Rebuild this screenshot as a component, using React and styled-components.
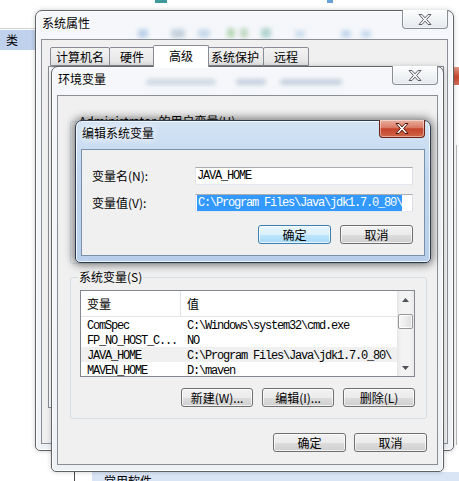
import React from 'react';
import styled, { createGlobalStyle } from 'styled-components';

const UI_FONT = `'Noto Sans CJK SC', 'Noto Sans', sans-serif`;
const MONO = `'Liberation Mono', 'Noto Sans CJK SC', monospace`;

const GlobalStyle = createGlobalStyle`
  html, body {
    margin: 0;
    padding: 0;
    background: #fff;
  }
  body {
    font-family: ${UI_FONT};
    font-size: 12px;
    color: #000;
  }
  * {
    box-sizing: border-box;
  }
`;

const Desktop = styled.div`
  position: relative;
  width: 459px;
  height: 481px;
  overflow: hidden;
  background: #fff;
`;

/* ---------- what lies behind the dialogs ---------- */

const Backdrop = styled.div`
  position: absolute;
  inset: 0;
  display: grid;
  grid-template-columns: 35px 1fr 6px;
  grid-template-rows: 1fr 9px;
`;

const LeftPane = styled.div`
  display: flex;
  flex-direction: column;
  .head {
    height: 29px;
    border-bottom: 1px solid #cfd3d8;
  }
  .row {
    margin-top: 1px;
    height: 20px;
    background: #bfd1ec;
    padding-left: 6px;
    line-height: 20px;
  }
`;

const MidPane = styled.div`
  display: flex;
  align-items: flex-start;
`;

const TopMark = styled.div`
  width: ${p => p.$w}px;
  height: 3px;
  margin-left: ${p => p.$ml}px;
  background: ${p => p.$c};
`;

const RightPane = styled.div`
  display: flex;
  flex-direction: column;
  padding-top: 67px;
  .red {
    height: 18px;
    background: linear-gradient(#e39b88, #c9462c 55%, #d3705a);
  }
  .line {
    margin-top: 60px;
    margin-left: 3px;
    width: 1px;
    height: 300px;
    background: #b8bcc2;
  }
`;

const BottomStrip = styled.div`
  grid-column: 1 / -1;
  display: flex;
  padding-left: 74px;
  .rule {
    width: 1px;
    background: #4a4a4a;
  }
  .band {
    margin-left: 17px;
    flex: 1;
    background: #d9e4f4;
    padding: 2px 0 0 12px;
    line-height: 14px;
    overflow: hidden;
  }
`;

/* ---------- window chrome ---------- */

const WindowFrame = styled.div`
  position: absolute;
  left: ${p => p.$x}px;
  top: ${p => p.$y}px;
  width: ${p => p.$w}px;
  height: ${p => p.$h}px;
  display: flex;
  flex-direction: column;
  padding: 0 5px 6px 5px;
  border: 1px solid ${p => (p.$active ? '#2e3c4f' : '#5f6368')};
  border-radius: 7px 7px 5px 5px;
  background: ${p =>
    p.$active
      ? 'linear-gradient(180deg, #d3e3f5 0%, #c0d6ee 40%, #b7cfea 100%)'
      : 'linear-gradient(180deg, #f5f7fa 0%, #eef2f7 100%)'};
  box-shadow: ${p =>
    p.$active
      ? '0 0 9px 2px rgba(0,0,0,0.5), inset 0 0 0 1px rgba(255,255,255,0.75)'
      : '0 0 5px rgba(0,0,0,0.2), inset 0 0 0 1px rgba(255,255,255,0.9)'};
`;

const TitleBar = styled.div`
  flex: none;
  height: 28px;
  display: flex;
  align-items: flex-start;
`;

const TitleText = styled.span`
  margin: 4px 0 0 1px;
  line-height: 16px;
  font-size: 12px;
  white-space: nowrap;
  text-shadow: 0 0 6px #fff, 0 0 10px #fff;
`;

const Ghosts = styled.div`
  flex: 1;
  align-self: stretch;
  display: flex;
  align-items: flex-end;
  padding-bottom: ${p => p.$pb}px;
  overflow: hidden;
`;

const Blob = styled.div`
  flex: none;
  width: ${p => p.$w}px;
  height: ${p => p.$h}px;
  margin-left: ${p => p.$ml}px;
  background: ${p => p.$c};
  border-radius: 3px;
  opacity: ${p => p.$o || 0.55};
  filter: blur(2px);
`;

const CloseButton = styled.div`
  flex: none;
  margin: -1px 0 0 auto;
  width: 46px;
  height: ${p => (p.$active ? 18 : 19)}px;
  display: flex;
  align-items: center;
  justify-content: center;
  border: 1px solid ${p => (p.$active ? '#6b2214' : '#8a8e94')};
  border-top: none;
  border-radius: 0 0 4px 4px;
  background: ${p =>
    p.$active
      ? 'linear-gradient(180deg, #eab0a1 0%, #d97a63 45%, #c4442a 52%, #cf6447 100%)'
      : 'linear-gradient(180deg, #fdfdfd 0%, #f1f3f6 50%, #e4e8ed 100%)'};
  box-shadow: inset 0 0 0 1px rgba(255, 255, 255, 0.45);
`;

const Client = styled.div`
  flex: 1;
  min-height: 0;
  display: flex;
  flex-direction: column;
  overflow: hidden;
  border: 1px solid ${p => (p.$active ? '#7b90aa' : '#8b8f95')};
  background: #f0f0f0;
`;

const XGlyph = ({ active }) => (
  <svg width="14" height="11" viewBox="0 0 14 11">
    <path
      d="M1 0.5h3l3 3.4 3-3.4h3l-4.4 5 4.4 5h-3l-3-3.4-3 3.4h-3l4.4-5z"
      fill={active ? '#ffffff' : '#f7f7f7'}
      stroke={active ? '#4d160c' : '#5b5e62'}
      strokeWidth="1"
      strokeLinejoin="round"
    />
  </svg>
);

const Window = ({ x, y, w, h, title, active, ghosts, ghostPad = 1, children }) => (
  <WindowFrame $x={x} $y={y} $w={w} $h={h} $active={active}>
    <TitleBar>
      <TitleText>{title}</TitleText>
      <Ghosts $pb={ghostPad}>
        {(ghosts || []).map((g, i) => (
          <Blob key={i} $ml={g[0]} $w={g[1]} $h={g[2]} $c={g[3]} $o={g[4]} />
        ))}
      </Ghosts>
      <CloseButton $active={active}>
        <XGlyph active={active} />
      </CloseButton>
    </TitleBar>
    <Client $active={active}>{children}</Client>
  </WindowFrame>
);

/* ---------- controls ---------- */

const Button = styled.div`
  flex: none;
  width: ${p => p.$w || 73}px;
  height: 19px;
  display: flex;
  align-items: center;
  justify-content: center;
  border: 1px solid ${p => (p.$default ? '#3c7fb1' : '#707070')};
  border-radius: 3px;
  background: ${p =>
    p.$default
      ? 'linear-gradient(180deg, #eaf6fd 0%, #d9f0fc 50%, #bee6fd 51%, #a7d9f5 100%)'
      : 'linear-gradient(180deg, #f2f2f2 0%, #ebebeb 50%, #dddddd 51%, #cfcfcf 100%)'};
  box-shadow: inset 0 0 0 1px rgba(255, 255, 255, 0.7);
  font-size: 12px;
  line-height: 1;
  white-space: nowrap;
`;

const ButtonRow = styled.div`
  display: flex;
  justify-content: flex-end;
  gap: ${p => p.$gap || 9}px;
  margin-top: ${p => p.$mt}px;
`;

const Mono = styled.span`
  font-family: ${MONO};
  font-size: 12px;
  letter-spacing: -1.2px;
  white-space: pre;
`;

/* ---------- 系统属性 ---------- */

const TabStrip = styled.div`
  flex: none;
  display: flex;
  align-items: flex-end;
  padding: 5px 0 0 8px;
`;

const Tab = styled.div`
  position: relative;
  flex: none;
  width: ${p => p.$w}px;
  height: ${p => (p.$selected ? 22 : 19)}px;
  margin: ${p => (p.$selected ? '0 -2px -1px -2px' : '0 0 0 -1px')};
  z-index: ${p => (p.$selected ? 1 : 0)};
  display: flex;
  align-items: center;
  justify-content: center;
  border: 1px solid #898c95;
  border-bottom: ${p => (p.$selected ? 'none' : '1px solid #898c95')};
  border-radius: 2px 2px 0 0;
  background: ${p => (p.$selected ? '#fff' : 'linear-gradient(180deg, #f3f3f3, #e3e3e3)')};
  padding-bottom: ${p => (p.$selected ? 2 : 0)}px;
  &:first-child {
    margin-left: 0;
  }
`;

const TabPanel = styled.div`
  flex: none;
  margin-left: 6px;
  width: 396px;
  height: 342px;
  border: 1px solid #898c95;
  background: #fff;
`;

/* ---------- 环境变量 ---------- */

const EnvBody = styled.div`
  display: flex;
  flex-direction: column;
  padding: 0 10px 0 12px;
`;

const GroupBox = styled.div`
  display: flex;
  flex-direction: column;
  margin-top: ${p => p.$mt}px;
  height: ${p => (p.$h ? `${p.$h}px` : 'auto')};
  padding: 0 11px 11px 9px;
  border: 1px solid #d5dfe5;
  border-radius: 3px;
`;

const Legend = styled.div`
  align-self: flex-start;
  margin: -8px 0 0 -2px;
  padding: 0 1px;
  line-height: 14px;
  background: #f0f0f0;
  white-space: nowrap;
`;

const ListBox = styled.div`
  display: flex;
  height: 87px;
  margin-top: 6px;
  border: 1px solid #828790;
  background: #fff;
  overflow: hidden;
`;

const ListMain = styled.div`
  flex: 1;
  min-width: 0;
  overflow: hidden;
`;

const ListHeader = styled.div`
  display: grid;
  grid-template-columns: 100px 1fr;
  height: 26px;
  border-bottom: 1px solid #e5e5e5;
`;

const HeaderCell = styled.div`
  display: flex;
  align-items: center;
  padding-left: 6px;
  border-right: ${p => (p.$first ? '1px solid #e2e3e5' : 'none')};
`;

const ListRow = styled.div`
  display: grid;
  grid-template-columns: 100px 1fr;
  height: 15px;
  align-items: center;
  background: ${p => (p.$hl ? '#f0f0f0' : 'transparent')};
`;

const Cell = styled.div`
  padding-left: 6px;
  overflow: hidden;
  line-height: 15px;
`;

const ScrollBar = styled.div`
  flex: none;
  width: 17px;
  display: flex;
  flex-direction: column;
  background: linear-gradient(90deg, #e6e6e6 0%, #f3f3f3 25%, #f3f3f3 75%, #e9e9e9 100%);
`;

const ScrollArrow = styled.div`
  flex: none;
  height: 17px;
  display: flex;
  align-items: center;
  justify-content: center;
`;

const ScrollThumb = styled.div`
  flex: none;
  margin: 6px 1px 0 1px;
  height: 15px;
  border: 1px solid #979797;
  border-radius: 2px;
  background: linear-gradient(90deg, #f7f7f7 0%, #ececec 50%, #dcdcdc 100%);
  box-shadow: inset 0 0 0 1px rgba(255, 255, 255, 0.8);
`;

const ScrollTrack = styled.div`
  flex: 1;
`;

const Arrow = ({ down }) => (
  <svg width="7" height="4" viewBox="0 0 7 4">
    <path d={down ? 'M0 0h7L3.5 4z' : 'M0 4h7L3.5 0z'} fill="#4f5358" />
  </svg>
);

/* ---------- 编辑系统变量 ---------- */

const EditForm = styled.div`
  display: flex;
  flex-direction: column;
  padding: 17px 11px 11px 10px;
`;

const FieldRow = styled.div`
  display: grid;
  grid-template-columns: 103px 1fr;
  align-items: center;
  height: 18px;
  margin-top: ${p => p.$mt || 0}px;
`;

const FieldLabel = styled.span`
  white-space: nowrap;
  line-height: 18px;
`;

const TextField = styled.div`
  height: 18px;
  display: flex;
  align-items: center;
  padding: 0 1px;
  border: 1px solid;
  border-color: #abadb3 #dbdfe6 #e3e9ef #e2e3ea;
  background: #fff;
  overflow: hidden;
`;

const Selection = styled.span`
  align-self: stretch;
  display: flex;
  align-items: center;
  padding-left: 1px;
  background: #3399ff;
  color: #fff;
`;

const rows = [
  { name: 'ComSpec', value: 'C:\\Windows\\system32\\cmd.exe' },
  { name: 'FP_NO_HOST_C...', value: 'NO' },
  { name: 'JAVA_HOME', value: 'C:\\Program Files\\Java\\jdk1.7.0_80\\', hl: true },
  { name: 'MAVEN_HOME', value: 'D:\\maven' },
];

// [margin-left, width, height, colour, opacity]
const sysGhosts = [
  [48, 10, 9, '#8fb3d9'],
  [23, 14, 9, '#9fb4c8'],
  [13, 12, 9, '#a8c4e0'],
  [17, 8, 10, '#8dc08a'],
  [5, 8, 10, '#9cc29a'],
  [13, 10, 10, '#7fb7b0'],
  [24, 10, 8, '#b3cde6'],
  [36, 10, 8, '#9fc0e2'],
  [10, 10, 8, '#a9c6e6'],
];

const envGhosts = [
  [40, 70, 6, '#3d5f91', 0.2],
  [20, 30, 6, '#3d5f91', 0.25],
  [14, 62, 6, '#3d5f91', 0.25],
];

const App = () => (
  <>
    <GlobalStyle />
    <Desktop>
      <Backdrop>
        <LeftPane>
          <div className="head" />
          <div className="row">类</div>
        </LeftPane>
        <MidPane>
          <TopMark $ml={120} $w={12} $c="#3f9b9b" />
          <TopMark $ml={160} $w={6} $c="#6aa0d8" />
        </MidPane>
        <RightPane>
          <div className="red" />
          <div className="line" />
        </RightPane>
        <BottomStrip>
          <div className="rule" />
          <div className="band">常用软件</div>
        </BottomStrip>
      </Backdrop>

      <Window x={35} y={10} w={419} h={441} title="系统属性" ghosts={sysGhosts}>
        <TabStrip>
          <Tab $w={60}>计算机名</Tab>
          <Tab $w={46}>硬件</Tab>
          <Tab $w={56} $selected>
            高级
          </Tab>
          <Tab $w={58}>系统保护</Tab>
          <Tab $w={46}>远程</Tab>
        </TabStrip>
        <TabPanel />
      </Window>

      <Window x={51} y={66} w={393} h={406} title="环境变量" ghosts={envGhosts} ghostPad={10}>
        <EnvBody>
          <GroupBox $mt={25} $h={143}>
            <Legend>Administrator 的用户变量(U)</Legend>
          </GroupBox>
          <GroupBox $mt={13}>
            <Legend>系统变量(S)</Legend>
            <ListBox>
              <ListMain>
                <ListHeader>
                  <HeaderCell $first>变量</HeaderCell>
                  <HeaderCell>值</HeaderCell>
                </ListHeader>
                {rows.map(r => (
                  <ListRow key={r.name} $hl={r.hl}>
                    <Cell>
                      <Mono>{r.name}</Mono>
                    </Cell>
                    <Cell>
                      <Mono>{r.value}</Mono>
                    </Cell>
                  </ListRow>
                ))}
              </ListMain>
              <ScrollBar>
                <ScrollArrow>
                  <Arrow />
                </ScrollArrow>
                <ScrollThumb />
                <ScrollTrack />
                <ScrollArrow>
                  <Arrow down />
                </ScrollArrow>
              </ScrollBar>
            </ListBox>
            <ButtonRow $mt={11}>
              <Button $w={72}>新建(W)...</Button>
              <Button $w={72}>编辑(I)...</Button>
              <Button $w={72}>删除(L)</Button>
            </ButtonRow>
          </GroupBox>
          <ButtonRow $mt={14} $gap={8}>
            <Button>确定</Button>
            <Button>取消</Button>
          </ButtonRow>
        </EnvBody>
      </Window>

      <Window x={75} y={120} w={356} h={143} title="编辑系统变量" active>
        <EditForm>
          <FieldRow>
            <FieldLabel>变量名(N):</FieldLabel>
            <TextField>
              <Mono>JAVA_HOME</Mono>
            </TextField>
          </FieldRow>
          <FieldRow $mt={9}>
            <FieldLabel>变量值(V):</FieldLabel>
            <TextField>
              <Selection>
                <Mono>{'C:\\Program Files\\Java\\jdk1.7.0_80\\'}</Mono>
              </Selection>
            </TextField>
          </FieldRow>
          <ButtonRow $mt={13}>
            <Button $default>确定</Button>
            <Button>取消</Button>
          </ButtonRow>
        </EditForm>
      </Window>
    </Desktop>
  </>
);

export default App;
